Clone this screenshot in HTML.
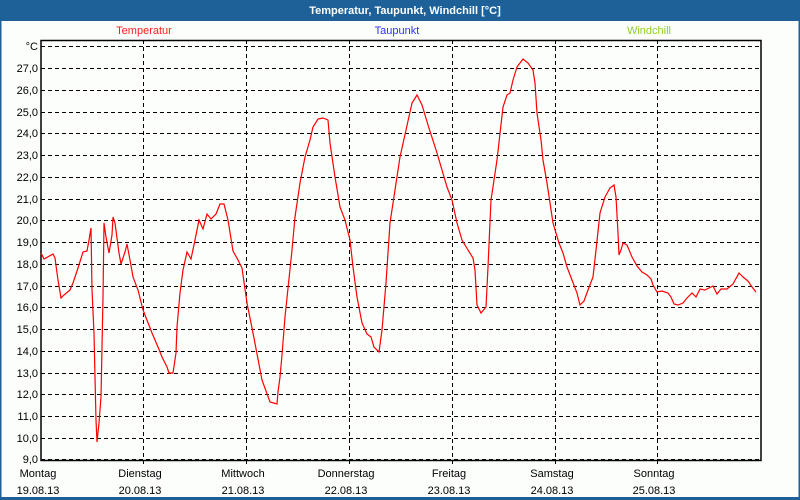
<!DOCTYPE html>
<html><head><meta charset="utf-8"><style>
html,body{margin:0;padding:0;background:#fff}
svg{display:block}
text{font-family:"Liberation Sans",sans-serif;font-size:11px}
</style></head><body>
<svg width="800" height="500" viewBox="0 0 800 500" xmlns="http://www.w3.org/2000/svg">
<rect x="0" y="0" width="800" height="500" fill="#fcfefc"/>
<rect x="0" y="0" width="800" height="21" fill="#1d6198"/>
<rect x="0" y="0" width="1.5" height="500" fill="#1d6198"/>
<rect x="798.5" y="0" width="1.5" height="500" fill="#1d6198"/>
<rect x="0" y="497" width="800" height="3" fill="#1d6198"/>
<text x="405" y="14" fill="#fff" font-weight="bold" text-anchor="middle">Temperatur, Taupunkt, Windchill [°C]</text>
<text x="144" y="34" fill="#ff2020" text-anchor="middle">Temperatur</text>
<text x="397" y="34" fill="#3030ff" text-anchor="middle">Taupunkt</text>
<text x="649" y="34" fill="#90d020" text-anchor="middle">Windchill</text>
<g stroke="#000" stroke-width="1" stroke-dasharray="4,3" fill="none">
<path d="M41 46.5H761M41 68.5H761M41 90.5H761M41 112.5H761M41 133.5H761M41 155.5H761M41 177.5H761M41 199.5H761M41 220.5H761M41 242.5H761M41 264.5H761M41 286.5H761M41 307.5H761M41 329.5H761M41 351.5H761M41 373.5H761M41 394.5H761M41 416.5H761M41 438.5H761M41 459.5H761"/>
<path d="M143.5 40V464M246.5 40V464M349.5 40V464M452.5 40V464M555.5 40V464M657.5 40V464"/>
</g>
<rect x="41" y="40.5" width="720" height="420" fill="none" stroke="#000" stroke-width="1.5"/>
<g fill="#000" text-anchor="end">
<text x="38" y="50">°C</text>
<text x="38" y="72">27,0</text><text x="38" y="94">26,0</text><text x="38" y="116">25,0</text><text x="38" y="137">24,0</text><text x="38" y="159">23,0</text><text x="38" y="181">22,0</text><text x="38" y="203">21,0</text><text x="38" y="224">20,0</text><text x="38" y="246">19,0</text><text x="38" y="268">18,0</text><text x="38" y="290">17,0</text><text x="38" y="311">16,0</text><text x="38" y="333">15,0</text><text x="38" y="355">14,0</text><text x="38" y="377">13,0</text><text x="38" y="398">12,0</text><text x="38" y="420">11,0</text><text x="38" y="442">10,0</text><text x="38" y="463">9,0</text>
</g>
<g fill="#000" text-anchor="middle">
<text x="38" y="477">Montag</text><text x="38" y="494">19.08.13</text>
<text x="140" y="477">Dienstag</text><text x="140" y="494">20.08.13</text>
<text x="243" y="477">Mittwoch</text><text x="243" y="494">21.08.13</text>
<text x="346" y="477">Donnerstag</text><text x="346" y="494">22.08.13</text>
<text x="449" y="477">Freitag</text><text x="449" y="494">23.08.13</text>
<text x="552" y="477">Samstag</text><text x="552" y="494">24.08.13</text>
<text x="654" y="477">Sonntag</text><text x="654" y="494">25.08.13</text>
</g>
<polyline fill="none" stroke="#ff0000" stroke-width="1.2" points="41,253 44,259 53,254 55,258 58,280 61,298 64,295 70,290 73,283 78,268 83,252 87,251 89,240 91,228 92,290 94,333 95,377 96,420 97,442 99,423 101,397 103,297 104,223 106,237 109,253 112,235 113,217 115,223 119,253 121,264 125,252 127,244 130,260 133,277 138,290 143,310 152,333 158,347 162,357 167,367 169,373 173,373 176,353 177,327 180,293 183,270 187,252 191,259 195,240 199,220 203,229 207,214 211,219 216,214 220,204 224,204 228,220 233,251 238,260 242,268 247,303 253,333 262,380 270,402 277,404 278,392 280,377 282,355 285,317 292,250 295,217 300,183 305,157 310,140 313,127 318,119 323,118 328,120 330,143 335,177 340,207 345,220 350,240 353,267 357,297 362,323 367,334 371,337 374,347 379,352 382,330 386,283 390,223 395,190 400,157 406,130 412,103 417,95 422,105 428,125 437,153 447,187 452,200 457,223 462,240 468,250 473,258 475,270 477,305 481,313 486,307 488,267 491,200 497,160 503,107 507,95 510,93 513,80 517,67 523,59 528,63 533,70 535,83 537,113 541,140 543,160 547,183 550,203 553,223 559,243 563,253 567,267 572,280 577,293 580,305 584,301 588,290 593,277 596,250 600,213 605,197 610,188 614,185 616,197 618,233 619,255 621,250 623,243 627,245 632,257 637,266 642,272 647,275 651,279 653,285 657,292 662,291 668,293 671,297 674,304 678,305 683,303 687,298 692,293 696,297 700,289 705,290 713,286 717,294 721,289 727,289 733,284 739,273 743,277 748,281 752,287 756,292"/>
</svg>
</body></html>
